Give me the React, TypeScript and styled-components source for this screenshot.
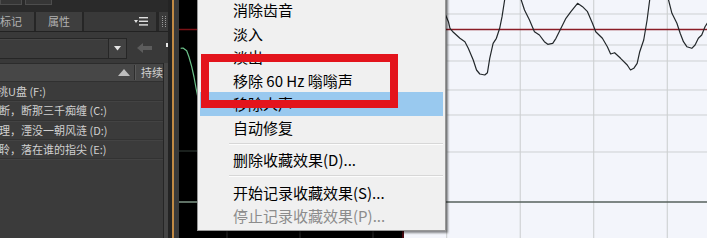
import React from 'react';
import styled, { createGlobalStyle } from 'styled-components';

const GlobalStyle = createGlobalStyle`
  html, body { margin: 0; padding: 0; background: #000; }
  body { font-family: "Noto Sans CJK SC", "Noto Sans", sans-serif; }
`;

const Screen = styled.div`
  position: relative;
  width: 707px;
  height: 238px;
  overflow: hidden;
  display: flex;
  background: #3b3b3b;
`;

/* ---------- left panel ---------- */
const LeftPanel = styled.div`
  width: 168px;
  flex: none;
  display: flex;
  flex-direction: column;
  background: #454545;
  font-family: "Noto Sans CJK SC", sans-serif;
  font-size: 11px;
  overflow: hidden;
`;

const TopStrip = styled.div`
  height: 12px;
  flex: none;
  display: flex;
  gap: 3px;
  align-items: flex-start;
  background: #2a2a2a;
`;

const StubBox = styled.div<{ $w: number }>`
  width: ${p => p.$w}px;
  height: 5px;
  box-sizing: border-box;
  background: #363636;
  border: 1px solid #4d4d4d;
  border-top: none;
`;

const TabBar = styled.div`
  height: 20px;
  flex: none;
  display: flex;
  gap: 2px;
  background: #262626;
  border-bottom: 1px solid #222;
  box-sizing: border-box;
`;

const Tab = styled.div<{ $w: number; $shift?: number }>`
  width: ${p => p.$w}px;
  margin-left: ${p => p.$shift ?? 0}px;
  flex: none;
  background: #3e3e3e;
  color: #b2b2b2;
  line-height: 19px;
  text-align: center;
`;

const TabFiller = styled.div`
  flex: 1;
  display: flex;
  align-items: center;
  justify-content: flex-end;
  padding-right: 8px;
  background: #393939;
  border-right: 1px solid #262626;
`;

const GripArea = styled.div`
  width: 9px;
  flex: none;
  display: flex;
  align-items: center;
  justify-content: center;
  background: #3a3a3a;
`;

const Toolbar = styled.div`
  height: 31px;
  flex: none;
  display: flex;
  align-items: flex-start;
  padding-top: 6px;
  box-sizing: border-box;
  background: #393939;
`;

const Dropdown = styled.div`
  width: 127px;
  height: 21px;
  flex: none;
  display: flex;
  justify-content: flex-end;
  box-sizing: border-box;
  background: #3c3c3c;
  border: 1px solid #262626;
  border-left: none;
  box-shadow: inset 0 1px 0 #464646;
`;

const DropButton = styled.div`
  width: 17px;
  display: flex;
  align-items: center;
  justify-content: center;
  background: #424242;
  border-left: 1px solid #262626;
`;

const BackArrow = styled.div`
  margin: 5px 0 0 10px;
  display: flex;
`;

const TinyMark = styled.div`
  width: 2px;
  height: 4px;
  margin: 5px 0 0 14px;
  background: #e6e6e6;
`;

const ListFrame = styled.div`
  width: 164px;
  flex: 1;
  display: flex;
  flex-direction: column;
  box-sizing: border-box;
  background: #3b3b3b;
  border-right: 1px solid #262626;
`;

const ListHeader = styled.div`
  height: 19px;
  flex: none;
  display: flex;
  align-items: center;
  justify-content: flex-end;
  box-sizing: border-box;
  background: #474747;
  border-top: 1px solid #2c2c2c;
  border-bottom: 1px solid #303030;
  color: #d2d2d2;
`;

const SortIcon = styled.div`
  display: flex;
  margin-right: 5px;
`;

const HeaderSep = styled.div`
  width: 1px;
  height: 15px;
  background: #5a5a5a;
  box-shadow: -1px 0 0 #2e2e2e;
  margin-right: 5px;
`;

const HeaderLabel = styled.div`
  width: 22px;
  line-height: 17px;
  white-space: nowrap;
`;

const Row = styled.div`
  height: 19.3px;
  flex: none;
  display: flex;
  align-items: center;
  box-sizing: border-box;
  border-bottom: 1px solid #323232;
  box-shadow: 0 1px 0 #434343;
  color: #d0d0d0;
  white-space: nowrap;
  overflow: hidden;
`;

const RowText = styled.span<{ $shift: number }>`
  margin-left: ${p => p.$shift}px;
`;

/* ---------- divider ---------- */
const Divider = styled.div`
  width: 11px;
  flex: none;
  display: flex;
`;

const Stripe = styled.div<{ $w: number; $c: string }>`
  width: ${p => p.$w}px;
  flex: none;
  background: ${p => p.$c};
`;

/* ---------- editor ---------- */
const Editor = styled.div`
  flex: 1;
  display: flex;
`;

const DarkPane = styled.div`
  width: 223px;
  flex: none;
  background: #000;
  display: flex;
`;

const LightPane = styled.div`
  flex: 1;
  display: flex;
  background: #f3f5fb;
  border-left: 2px solid #4a0c12;
`;

const Chart = styled.svg`
  display: block;
  width: 100%;
  height: 100%;
`;

/* ---------- context menu (overlay) ---------- */
const Menu = styled.div`
  position: absolute;
  left: 197px;
  top: -5px;
  width: 249px;
  box-sizing: border-box;
  padding: 2px;
  background: #f0f0f0;
  border: 1px solid #979797;
  box-shadow: 2px 2px 2px rgba(0, 0, 0, 0.45);
  font-family: "Noto Sans CJK SC", "Noto Sans", sans-serif;
  font-size: 15px;
`;

const MenuItem = styled.div<{ $active?: boolean; $disabled?: boolean }>`
  height: 23.5px;
  line-height: 23.5px;
  padding-left: 33px;
  white-space: nowrap;
  color: ${p => (p.$disabled ? '#8c8c8c' : '#000')};
  background: ${p => (p.$active ? '#99c9ef' : 'transparent')};
`;

const MenuSep = styled.div`
  height: 9px;
  display: flex;
  align-items: center;
  padding-left: 29px;
  &::after {
    content: '';
    flex: 1;
    height: 1px;
    background: #d7d7d7;
    border-bottom: 1px solid #fcfcfc;
  }
`;

const Annotation = styled.div`
  position: absolute;
  left: 201px;
  top: 54px;
  width: 197px;
  height: 54px;
  box-sizing: border-box;
  border: 8px solid #e3141c;
`;

const rows = [
  { text: '桃U盘 (F:)', shift: -3 },
  { text: '断，断那三千痴缠 (C:)', shift: -1 },
  { text: '理，湮没一朝风涟 (D:)', shift: -1 },
  { text: '聆，落在谁的指尖 (E:)', shift: -1 },
];

type Item = { label?: string; sep?: boolean; active?: boolean; disabled?: boolean };
const menuItems: Item[] = [
  { label: '消除齿音' },
  { label: '淡入' },
  { label: '淡出' },
  { label: '移除 60 Hz 嗡嗡声' },
  { label: '移除人声', active: true },
  { label: '自动修复' },
  { sep: true },
  { label: '删除收藏效果(D)...' },
  { sep: true },
  { label: '开始记录收藏效果(S)...' },
  { label: '停止记录收藏效果(P)...', disabled: true },
];

const lightWave: [number, number][] = [
  [30, -4], [38, 6], [44.7, 21.7], [46.3, 28.3], [49.7, 32.3], [56.3, 38.3], [61.3, 41.7], [64.7, 48.3],
  [69.7, 60], [73, 70], [76.3, 74], [81.3, 75], [84, 72.7], [86.3, 58.3], [89.7, 43.3], [93, 38.3],
  [96.3, 28.3], [98.7, 16.7], [101.3, 0], [103, -6], [114, -6], [118, 0], [121.3, 10], [126.3, 20],
  [131.3, 31.7], [136.3, 35], [141.3, 41.7], [144.7, 44.3], [149.7, 43.3], [153, 38.3], [158, 28.3],
  [163, 18.3], [168, 11.7], [174.7, 3.3], [179.7, 6.7], [184.7, 11.7], [189.7, 23.3], [193, 31.7],
  [199.7, 38.3], [204.7, 46.7], [208, 54], [212, 52.7], [218, 58.3], [224.7, 65], [228, 70],
  [231.3, 68.3], [234.7, 63.3], [237.3, 51.7], [241.3, 40], [244.7, 20], [247.3, 0], [249, -6],
  [262, -6], [266.3, 0], [269.7, 13.3], [274.7, 23.3], [278, 33.3], [281.3, 41.7], [284.7, 46.7],
  [289.7, 48.3], [293, 45], [296.3, 38.3], [299.7, 35], [303, 26.7], [306, 22],
];

const darkWave: [number, number][] = [
  [1.7, 48.3], [4, 48], [7.7, 50.7], [10, 57], [12.7, 66.7], [15, 77], [17, 88], [19, 98], [24, 120], [30, 140],
];

const pts = (a: [number, number][]) => a.map(([x, y]) => `${x},${y}`).join(' ');

export default function App() {
  return (
    <>
      <GlobalStyle />
      <Screen>
        <LeftPanel>
          <TopStrip>
            <StubBox $w={22} />
            <StubBox $w={27} />
          </TopStrip>
          <TabBar>
            <Tab $w={46} $shift={-12}>标记</Tab>
            <Tab $w={46}>属性</Tab>
            <TabFiller>
              <svg width="14" height="9" viewBox="0 0 14 9">
                <polygon points="0,3 4,3 2,6" fill="#e0e0e0" />
                <rect x="5" y="0" width="9" height="1.4" fill="#e0e0e0" />
                <rect x="5" y="3.6" width="9" height="1.4" fill="#e0e0e0" />
                <rect x="5" y="7.2" width="9" height="1.4" fill="#e0e0e0" />
              </svg>
            </TabFiller>
            <GripArea>
              <svg width="4" height="12" viewBox="0 0 4 12">
                {[0, 2, 4, 6, 8, 10].map(y => (
                  <React.Fragment key={y}>
                    <rect x="0" y={y} width="1" height="1" fill="#9a9a9a" />
                    <rect x="3" y={y} width="1" height="1" fill="#9a9a9a" />
                  </React.Fragment>
                ))}
              </svg>
            </GripArea>
          </TabBar>
          <Toolbar>
            <Dropdown>
              <DropButton>
                <svg width="7" height="5" viewBox="0 0 7 5">
                  <polygon points="0,0 7,0 3.5,4.5" fill="#e4e4e4" />
                </svg>
              </DropButton>
            </Dropdown>
            <BackArrow>
              <svg width="15" height="10" viewBox="0 0 15 10">
                <polygon points="0,5 6,0 6,3 15,3 15,7 6,7 6,10" fill="#5c5c5c" />
              </svg>
            </BackArrow>
            <TinyMark />
          </Toolbar>
          <ListFrame>
            <ListHeader>
              <SortIcon>
                <svg width="12" height="7" viewBox="0 0 12 7">
                  <polygon points="0,7 6,0 12,7" fill="#bdbdbd" />
                </svg>
              </SortIcon>
              <HeaderSep />
              <HeaderLabel>持续</HeaderLabel>
            </ListHeader>
            {rows.map(r => (
              <Row key={r.text}>
                <RowText $shift={r.shift}>{r.text}</RowText>
              </Row>
            ))}
          </ListFrame>
        </LeftPanel>

        <Divider>
          <Stripe $w={4} $c="#242424" />
          <Stripe $w={2} $c="#c28a44" />
          <Stripe $w={5} $c="#3a3a3a" />
        </Divider>

        <Editor>
          <DarkPane>
            <Chart viewBox="0 0 223 238" preserveAspectRatio="none">
              <line x1="48" y1="0" x2="48" y2="238" stroke="#2c2c2c" strokeWidth="1" />
              <line x1="121" y1="0" x2="121" y2="238" stroke="#2c2c2c" strokeWidth="1" />
              <line x1="194" y1="0" x2="194" y2="238" stroke="#2c2c2c" strokeWidth="1" />
              <line x1="0" y1="29.5" x2="223" y2="29.5" stroke="#7a1216" strokeWidth="1.5" />
              <line x1="0" y1="151" x2="223" y2="151" stroke="#34403a" strokeWidth="1" />
              <line x1="0" y1="202" x2="223" y2="202" stroke="#7f9787" strokeWidth="1.5" />
              <polyline points={pts(darkWave)} fill="none" stroke="#6cc28a" strokeWidth="1.2" strokeLinejoin="round" />
            </Chart>
          </DarkPane>
          <LightPane>
            <Chart viewBox="0 0 305 238" preserveAspectRatio="none">
              {[43, 117, 191, 265].map(x => (
                <line key={x} x1={x} y1="0" x2={x} y2="238" stroke="#c9cccd" strokeWidth="1" />
              ))}
              {[14, 45, 61, 90, 115, 152].map(y => (
                <line key={y} x1="0" y1={y} x2="305" y2={y} stroke="#cdd0d2" strokeWidth="1" />
              ))}
              <line x1="0" y1="202" x2="305" y2="202" stroke="#56605c" strokeWidth="1.6" />
              <line x1="0" y1="29.5" x2="305" y2="29.5" stroke="#8a1c26" strokeWidth="1.5" />
              <polyline points={pts(lightWave)} fill="none" stroke="#22272a" strokeWidth="1.2" strokeLinejoin="round" />
            </Chart>
          </LightPane>
        </Editor>

        <Menu>
          {menuItems.map((it, i) =>
            it.sep ? (
              <MenuSep key={i} />
            ) : (
              <MenuItem key={i} $active={it.active} $disabled={it.disabled}>
                {it.label}
              </MenuItem>
            )
          )}
        </Menu>
        <Annotation />
      </Screen>
    </>
  );
}
